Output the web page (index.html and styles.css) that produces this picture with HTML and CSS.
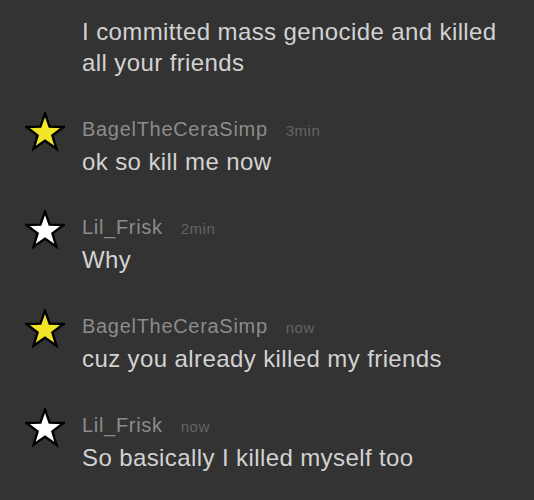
FILE: index.html
```html
<!DOCTYPE html>
<html>
<head>
<meta charset="utf-8">
<link rel="stylesheet" href="styles.css">
</head>
<body>
<div class="chat">
  <div class="row">
    <div class="avatar"></div>
    <div class="body">
      <div class="msg">I committed mass genocide and killed<br>all your friends</div>
    </div>
  </div>
  <div class="row">
    <div class="avatar">
      <svg class="star" viewBox="0 0 40 40" width="40" height="40"><polygon class="yellow" points="20,1.5 24.59,14.69 38.55,14.97 27.42,23.41 31.47,36.78 20,28.8 8.53,36.78 12.58,23.41 1.45,14.97 15.41,14.69"/></svg>
    </div>
    <div class="body">
      <div class="head"><span class="name">BagelTheCeraSimp</span><span class="time">3min</span></div>
      <div class="msg">ok so kill me now</div>
    </div>
  </div>
  <div class="row">
    <div class="avatar">
      <svg class="star" viewBox="0 0 40 40" width="40" height="40"><polygon class="white" points="20,1.5 24.59,14.69 38.55,14.97 27.42,23.41 31.47,36.78 20,28.8 8.53,36.78 12.58,23.41 1.45,14.97 15.41,14.69"/></svg>
    </div>
    <div class="body">
      <div class="head"><span class="name">Lil_Frisk</span><span class="time">2min</span></div>
      <div class="msg">Why</div>
    </div>
  </div>
  <div class="row">
    <div class="avatar">
      <svg class="star" viewBox="0 0 40 40" width="40" height="40"><polygon class="yellow" points="20,1.5 24.59,14.69 38.55,14.97 27.42,23.41 31.47,36.78 20,28.8 8.53,36.78 12.58,23.41 1.45,14.97 15.41,14.69"/></svg>
    </div>
    <div class="body">
      <div class="head"><span class="name">BagelTheCeraSimp</span><span class="time">now</span></div>
      <div class="msg">cuz you already killed my friends</div>
    </div>
  </div>
  <div class="row">
    <div class="avatar">
      <svg class="star" viewBox="0 0 40 40" width="40" height="40"><polygon class="white" points="20,1.5 24.59,14.69 38.55,14.97 27.42,23.41 31.47,36.78 20,28.8 8.53,36.78 12.58,23.41 1.45,14.97 15.41,14.69"/></svg>
    </div>
    <div class="body">
      <div class="head"><span class="name">Lil_Frisk</span><span class="time">now</span></div>
      <div class="msg">So basically I killed myself too</div>
    </div>
  </div>
</div>
</body>
</html>
```
FILE: styles.css
```css
html, body {
  margin: 0;
  padding: 0;
  background: #333333;
}
body {
  font-family: "Liberation Sans", Arial, sans-serif;
  width: 534px;
  height: 500px;
  overflow: hidden;
}
.chat {
  display: flex;
  flex-direction: column;
  gap: 38.7px;
  padding-top: 16px;
}
.row {
  display: flex;
}
.avatar {
  width: 82px;
  flex: none;
}
.star {
  display: block;
  margin-left: 25px;
  margin-top: -5px;
}
.star polygon {
  stroke: #000;
  stroke-width: 2.4;
  stroke-linejoin: miter;
}
.star .yellow { fill: #f2e526; }
.star .white { fill: #ffffff; }
.head {
  display: flex;
  align-items: baseline;
  gap: 18px;
  height: 24px;
  line-height: 24px;
  margin-bottom: 5px;
}
.name {
  font-size: 20px;
  letter-spacing: 0.7px;
  color: #8c8c8c;
}
.time {
  font-size: 15px;
  letter-spacing: 0.5px;
  color: #646464;
}
.msg {
  font-size: 24px;
  line-height: 31px;
  letter-spacing: 0.4px;
  color: #d2d2d2;
}
```
